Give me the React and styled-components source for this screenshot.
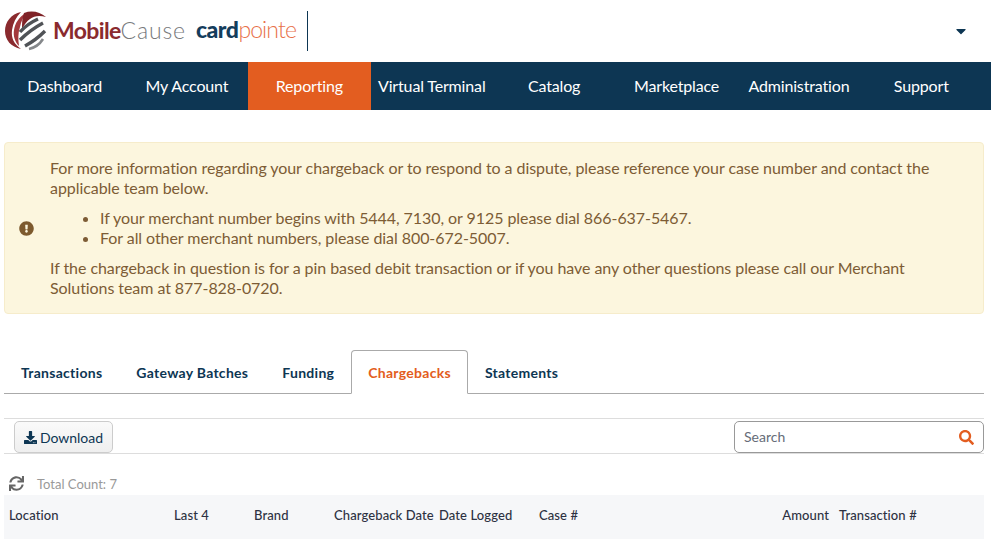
import React from 'react'
import styled, { createGlobalStyle } from 'styled-components'
import { FaExclamationCircle, FaDownload, FaSync, FaSearch, FaCaretDown } from 'react-icons/fa'

const GlobalStyle = createGlobalStyle`
  html, body {
    margin: 0;
    padding: 0;
    background: #fff;
    overflow: hidden;
    font-family: Lato, "Liberation Sans", sans-serif;
  }
  * { box-sizing: border-box; }
`

const navItems = [
  { label: 'Dashboard' },
  { label: 'My Account' },
  { label: 'Reporting', active: true },
  { label: 'Virtual Terminal' },
  { label: 'Catalog' },
  { label: 'Marketplace' },
  { label: 'Administration' },
  { label: 'Support' },
]

const tabs = ['Transactions', 'Gateway Batches', 'Funding', 'Chargebacks', 'Statements']

const columns = [
  { label: 'Location', width: 165 },
  { label: 'Last 4', width: 80 },
  { label: 'Brand', width: 80 },
  { label: 'Chargeback Date', width: 105 },
  { label: 'Date Logged', width: 100 },
  { label: 'Case #', width: 200 },
  { label: 'Amount', width: 100, right: true },
  { label: 'Transaction #', width: 100 },
]

const LogoMark = () => (
  <svg width='42' height='40' viewBox='0 0 42 40'>
    <path d='M16 1C6 3 0 11 0 20c0 9 6 16 16 18C9 33 6 27 7 19 8 12 11 6 16 1Z' fill='#8a2a2e' />
    <path d='M21 2C14 6 10 12 9 19c-1 6 1 12 5 16-1-7-1-13 1-19 1-5 3-10 6-14Z' fill='#a3383c' />
    <path d='M19 2c8-3 16-1 22 4-7-2-12-1-16 2-3 2-6 6-8 10 0-6 0-11 2-16Z' fill='#7f2327' />
    <g fill='none' stroke='#505357' strokeWidth='3.4'>
      <path d='M15 21Q22 13 33 8' />
      <path d='M15 29Q25 19 38 12' />
      <path d='M20 35Q31 29 40 20' />
    </g>
    <path d='M24 38Q33 36 38 28' fill='none' stroke='#85888b' strokeWidth='2.6' />
  </svg>
)

const App = () => {
  return (
    <>
      <GlobalStyle />
      <Header>
        <LogoMark />
        <MobileCause>
          <b>Mobile</b>Cause
        </MobileCause>
        <CardPointe>
          <b>card</b>pointe
        </CardPointe>
        <Divider />
        <Caret>
          <FaCaretDown />
        </Caret>
      </Header>

      <Nav>
        {navItems.map((item) => (
          <NavItem key={item.label} $active={item.active}>
            {item.label}
          </NavItem>
        ))}
      </Nav>

      <Alert>
        <AlertIcon>
          <FaExclamationCircle />
        </AlertIcon>
        <AlertBody>
          <p>
            For more information regarding your chargeback or to respond to a dispute, please reference your case
            number and contact the applicable team below.
          </p>
          <ul>
            <li>If your merchant number begins with 5444, 7130, or 9125 please dial 866-637-5467.</li>
            <li>For all other merchant numbers, please dial 800-672-5007.</li>
          </ul>
          <p>
            If the chargeback in question is for a pin based debit transaction or if you have any other questions
            please call our Merchant Solutions team at 877-828-0720.
          </p>
        </AlertBody>
      </Alert>

      <Tabs>
        {tabs.map((tab) => (
          <Tab key={tab} $active={tab === 'Chargebacks'}>
            {tab}
          </Tab>
        ))}
      </Tabs>

      <Toolbar>
        <DownloadButton>
          <FaDownload />
          Download
        </DownloadButton>
        <SearchBox>
          <span>Search</span>
          <FaSearch />
        </SearchBox>
      </Toolbar>

      <CountRow>
        <FaSync />
        <span>Total Count: 7</span>
      </CountRow>

      <TableHead>
        {columns.map((col) => (
          <HeadCell key={col.label} $width={col.width} $right={col.right}>
            {col.label}
          </HeadCell>
        ))}
      </TableHead>
    </>
  )
}

const Header = styled.header`
  height: 62px;
  display: flex;
  align-items: center;
  padding: 0 21px 0 5px;
`

const MobileCause = styled.div`
  margin-left: 6px;
  margin-top: -2px;
  font-size: 23px;
  letter-spacing: 0.85px;
  color: #77797c;
  font-weight: 300;
  b {
    color: #8a2a2e;
    font-weight: 700;
    letter-spacing: -0.65px;
  }
`

const CardPointe = styled.div`
  margin-left: 10px;
  margin-top: -4px;
  font-size: 23px;
  letter-spacing: -0.9px;
  color: #e8714a;
  font-weight: 300;
  b {
    color: #143d5c;
    font-weight: 900;
    letter-spacing: -0.5px;
  }
`

const Divider = styled.div`
  width: 1px;
  height: 40px;
  margin-left: 11px;
  background: #0d3653;
`

const Caret = styled.div`
  margin-left: auto;
  margin-right: 1px;
  color: #0d3653;
  font-size: 16px;
  display: flex;
`

const Nav = styled.nav`
  height: 48px;
  background: #0d3653;
  padding-left: 3.4px;
  display: flex;
`

const NavItem = styled.a`
  width: 122.4px;
  padding-bottom: 2px;
  display: flex;
  align-items: center;
  justify-content: center;
  font-size: 16px;
  letter-spacing: -0.15px;
  white-space: nowrap;
  color: #fff;
  background: ${(p) => (p.$active ? '#e35d20' : 'transparent')};
`

const Alert = styled.div`
  margin: 32px 7px 0 4px;
  height: 172px;
  display: flex;
  align-items: center;
  background: #fcf6de;
  border: 1px solid #f6eccb;
  border-radius: 4px;
  color: #7d5c35;
`

const AlertIcon = styled.div`
  width: 45px;
  padding-left: 14px;
  font-size: 15px;
  display: flex;
  color: #7d5a2e;
`

const AlertBody = styled.div`
  flex: 1;
  font-size: 16px;
  line-height: 20px;
  letter-spacing: -0.065px;
  padding-right: 20px;

  p {
    margin: 0;
  }
  ul {
    margin: 10px 0;
    padding-left: 50px;
  }
`

const Tabs = styled.div`
  margin: 36px 7px 0 4px;
  height: 44px;
  display: flex;
  border-bottom: 1px solid #aaa;
`

const Tab = styled.div`
  height: 44px;
  padding: 0 16px;
  display: flex;
  align-items: center;
  font-size: 14px;
  font-weight: 700;
  letter-spacing: 0.28px;
  border-radius: 4px 4px 0 0;
  color: ${(p) => (p.$active ? '#e35d20' : '#0d3653')};
  background: ${(p) => (p.$active ? '#fff' : 'transparent')};
  border: 1px solid ${(p) => (p.$active ? '#aaa' : 'transparent')};
  border-bottom-color: ${(p) => (p.$active ? '#fff' : 'transparent')};
`

const Toolbar = styled.div`
  margin: 24px 7px 0 4px;
  height: 36px;
  padding: 2px 0 0 10px;
  display: flex;
  justify-content: space-between;
  align-items: flex-start;
  border-top: 1px solid #ddd;
  border-bottom: 1px solid #ddd;
`

const DownloadButton = styled.button`
  width: 99px;
  height: 32px;
  padding: 0;
  display: flex;
  align-items: center;
  justify-content: center;
  gap: 3px;
  font-family: inherit;
  font-size: 14px;
  color: #0d3653;
  background: linear-gradient(#fafafa, #efefef);
  border: 1px solid #ccc;
  border-radius: 5px;

  svg {
    font-size: 13px;
  }
`

const SearchBox = styled.div`
  width: 250px;
  height: 32px;
  padding: 0 9px 2px;
  display: flex;
  align-items: center;
  justify-content: space-between;
  font-size: 14px;
  color: #666c78;
  background: #fff;
  border: 1px solid #999;
  border-radius: 5px;

  svg {
    font-size: 15px;
    color: #e35d20;
    margin-top: 2px;
  }
`

const CountRow = styled.div`
  height: 41px;
  padding: 18px 0 0 9px;
  display: flex;
  align-items: center;
  gap: 13px;
  font-size: 13px;
  color: #999;

  svg {
    font-size: 15px;
    color: #666;
  }
`

const TableHead = styled.div`
  margin: 0 7px 0 4px;
  height: 44px;
  padding: 0 0 4px 5px;
  display: flex;
  align-items: center;
  background: #f6f7f9;
`

const HeadCell = styled.div`
  width: ${(p) => p.$width}px;
  flex: none;
  white-space: nowrap;
  font-size: 13px;
  font-weight: 500;
  letter-spacing: 0.1px;
  color: #2d3142;
  text-align: ${(p) => (p.$right ? 'right' : 'left')};
  padding-right: ${(p) => (p.$right ? '10px' : '0')};
`

export default App
